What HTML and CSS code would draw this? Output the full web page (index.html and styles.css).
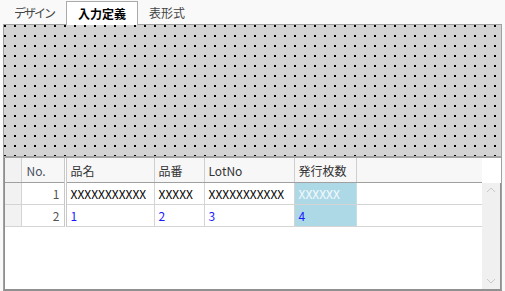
FILE: index.html
```html
<!DOCTYPE html>
<html lang="ja">
<head>
  <meta charset="UTF-8">
  <title>入力定義</title>
  <link rel="stylesheet" href="styles.css">
</head>
<body>

  <div class="tabs">
    <div class="tab narrow">デザイン</div>
    <div class="tab active">入力定義</div>
    <div class="tab">表形式</div>
  </div>

  <div class="panel">
    <div class="canvas"></div>
    <div class="splitter"></div>

    <div class="grid">
      <div class="grid-body">
        <table class="sheet">
          <colgroup>
            <col class="c-head">
            <col class="c-no">
            <col class="c-name">
            <col class="c-part">
            <col class="c-lot">
            <col class="c-count">
            <col>
          </colgroup>
          <tr class="hdr">
            <th class="rh"></th>
            <th class="no">No.</th>
            <th>品名</th>
            <th>品番</th>
            <th>LotNo</th>
            <th>発行枚数</th>
            <th class="empty"></th>
          </tr>
          <tr>
            <td class="rh"></td>
            <td class="no">1</td>
            <td>XXXXXXXXXXX</td>
            <td>XXXXX</td>
            <td>XXXXXXXXXXX</td>
            <td class="sel light">XXXXXX</td>
            <td></td>
          </tr>
          <tr class="vals">
            <td class="rh"></td>
            <td class="no">2</td>
            <td>1</td>
            <td>2</td>
            <td>3</td>
            <td class="sel">4</td>
            <td></td>
          </tr>
        </table>
      </div>
      <div class="scroll">
        <svg width="18" height="12" viewBox="0 0 18 12"><path d="M5 8 L9 4 L13 8" fill="none" stroke="#c8c8c8" stroke-width="1"/></svg>
        <svg width="18" height="12" viewBox="0 0 18 12"><path d="M5 4 L9 8 L13 4" fill="none" stroke="#c8c8c8" stroke-width="1"/></svg>
      </div>
    </div>
  </div>

</body>
</html>
```

FILE: styles.css
```css
body {
  margin: 0;
  background: #f9f9f9;
  font-family: "Noto Sans CJK JP", "Noto Sans", sans-serif;
  font-size: 12px;
  color: #333;
}

.tabs {
  display: flex;
  height: 24px;
  padding-left: 3px;
  align-items: flex-end;
}

.tab {
  height: 23px;
  line-height: 23px;
  padding: 0 11px;
  color: #444;
  box-sizing: border-box;
}

.tab.narrow {
  letter-spacing: -2px;
  padding-right: 12px;
}

.tab.active {
  background: #fff;
  border: 1px solid #aaa;
  border-bottom: none;
  margin: 0 0 -1px;
  height: 24px;
  line-height: 23px;
  padding: 0 11px;
  color: #000;
  font-weight: bold;
  position: relative;
}

.panel {
  margin-left: 3px;
  width: 497px;
  border: 1px solid #a0a0a0;
  border-bottom: 2px solid #909090;
  background: #fff;
}

/* 2x2 black dot every 10px */
.canvas {
  height: 131px;
  background-color: #d3d3d3;
  background-image: conic-gradient(from 270deg at 2px 2px, #000 90deg, #d3d3d3 0);
  background-size: 10px 10px;
  background-position: 0 0;
}

.splitter {
  height: 2px;
  background: #a3a3a3;
}

.grid {
  display: flex;
  height: 131px;
  border-left: 1px solid #8f8f8f;
}

.grid-body {
  flex: 1;
  background: #fff;
}

.sheet {
  border-collapse: collapse;
  table-layout: fixed;
  width: 100%;
}

.c-head { width: 16px; }
.c-no { width: 44px; }
.c-name { width: 89px; }
.c-part { width: 50px; }
.c-lot { width: 90px; }
.c-count { width: 62px; }

.sheet th,
.sheet td {
  padding: 0 0 0 4px;
  text-align: left;
  white-space: nowrap;
  overflow: hidden;
  border-right: 1px solid #d4d4d4;
  border-bottom: 1px solid #d4d4d4;
}

.sheet th {
  height: 24px;
  font-weight: normal;
  color: #333;
  background: #f7f7f7;
  border-bottom: 1px solid #a0a0a0;
  border-right-color: #cfcfcf;
}

.sheet th.empty {
  border-right: none;
}

.sheet td {
  height: 21px;
  color: #000;
}

.sheet .rh {
  background: #f2f2f2;
  padding: 0;
}

.sheet .no {
  text-align: right;
  padding-right: 4px;
  color: #555;
  border-right: 3px double #c8c8c8;
}

.sheet th.no {
  text-align: left;
  padding-left: 5px;
  color: #4a5060;
}

.sheet td:last-child {
  border-right: none;
}

.vals td {
  color: #1a1aff;
}

.vals td.no {
  color: #555;
}

.sheet td.sel {
  background: #add8e6;
  border-right-color: #c4dde6;
}

.sheet td.light {
  color: #f4fbff;
}

.scroll {
  width: 18px;
  margin-top: 25px;
  background: #f0f0f0;
  display: flex;
  flex-direction: column;
  justify-content: space-between;
  padding: 1px 0 2px;
  border-right: 1px solid #909090;
}

.scroll svg {
  display: block;
}
```
